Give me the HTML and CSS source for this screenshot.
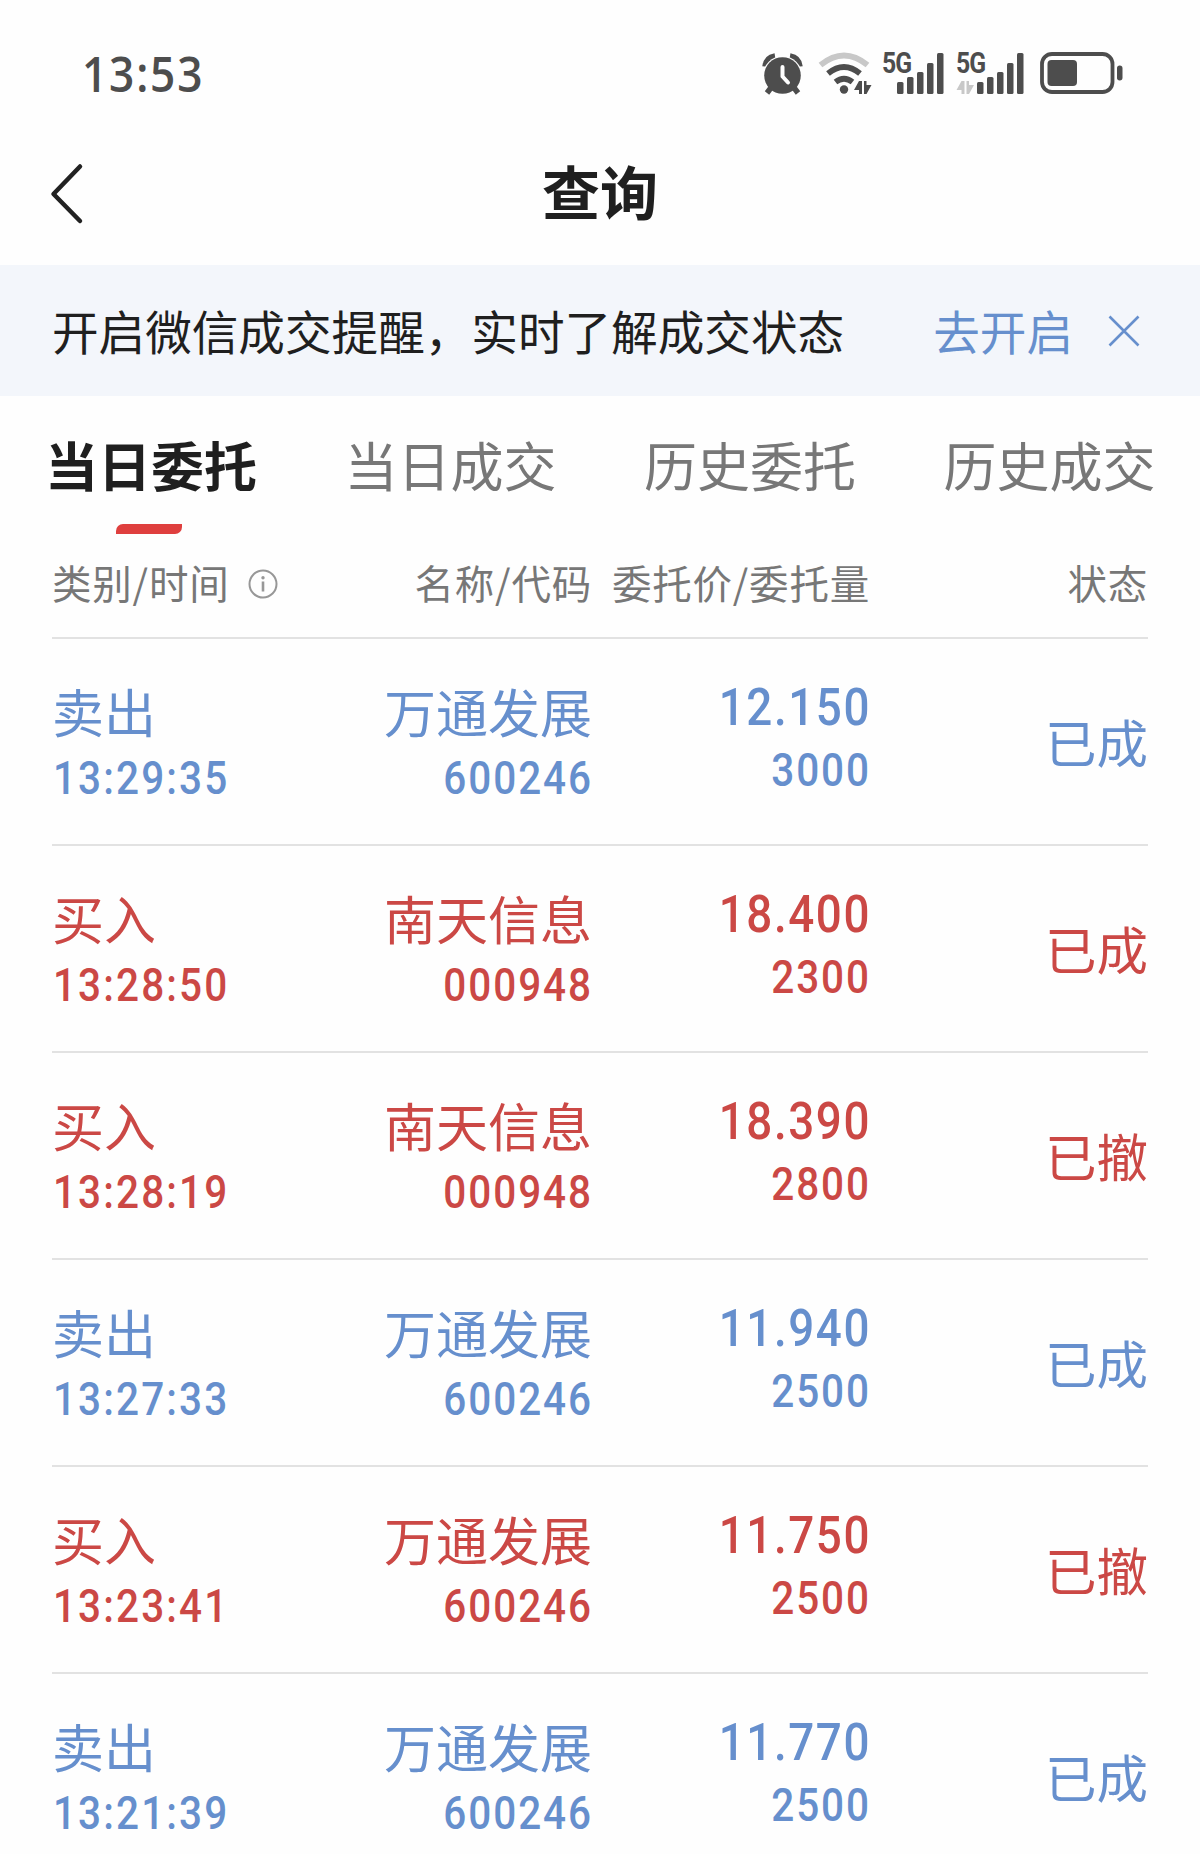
FILE: index.html
```html
<!DOCTYPE html>
<html lang="zh-CN">
<head>
    <meta charset="UTF-8">
    <meta name="viewport" content="width=device-width, initial-scale=1.0">
    <title>查询</title>
    <link rel="stylesheet" href="styles.css">
</head>
<body>
    <div class="status-bar">
        <span class="clock">13:53</span>
        <svg class="status-icons" width="340" height="44" viewBox="0 0 340 44" fill="#4d4d4d">
            <!-- alarm -->
            <g>
                <path d="M2 13.500 Q3 4.500 12 3 M27 3 Q36 4.500 37 13.500" fill="none" stroke="#4d4d4d" stroke-width="5.500"/>
                <path d="M8.500 34 L4 40 M30.500 34 L35 40" stroke="#4d4d4d" stroke-width="5.500"/>
                <circle cx="19.500" cy="22.500" r="19.500" stroke="none" fill="#fefefe" clip-path="inset(0 0 18px 0)"/>
                <circle cx="19.500" cy="22.500" r="18.300"/>
                <path d="M19.500 14 V23.500 L25 29.500" fill="none" stroke="#fff" stroke-width="4" stroke-linecap="round" stroke-linejoin="round"/>
            </g>
            <!-- wifi -->
            <g fill="none" stroke-width="5.800">
                <path d="M57.500 12 Q81 -7 104.500 12" stroke="#c8c8c8"/>
                <path d="M65 20.500 Q81 7.500 97 20.500" stroke="#4d4d4d"/>
                <path d="M72.500 29 Q81 22.500 89.500 29" stroke="#4d4d4d"/>
            </g>
            <circle cx="81" cy="36.500" r="4.200"/>
            <path d="M96 28 H99 V41 H96 V37 H91 Z M101 28 H103.500 V32 H108.500 L103.500 41 H101 Z"/>
            <!-- sim 1 -->
            <text class="net" transform="translate(119 20) scale(.84 1)">5G</text>
            <g>
                <rect x="134" y="29" width="6.500" height="12" rx="1.500"/>
                <rect x="144" y="24" width="6.500" height="17" rx="1.500"/>
                <rect x="154" y="19" width="6.500" height="22" rx="1.500"/>
                <rect x="164" y="10" width="6.500" height="31" rx="1.500"/>
                <rect x="174" y="0" width="6.500" height="41" rx="1.500"/>
            </g>
            <!-- sim 2 -->
            <text class="net" transform="translate(193 20) scale(.84 1)">5G</text>
            <path fill="#c8c8c8" d="M198.500 28 H201.500 V41 H198.500 V37 H193.500 Z M203.500 28 H206 V32 H211 L206 41 H203.500 Z"/>
            <g>
                <rect x="214" y="29" width="6.500" height="12" rx="1.500"/>
                <rect x="224" y="24" width="6.500" height="17" rx="1.500"/>
                <rect x="234" y="19" width="6.500" height="22" rx="1.500"/>
                <rect x="244" y="10" width="6.500" height="31" rx="1.500"/>
                <rect x="254" y="0" width="6.500" height="41" rx="1.500"/>
            </g>
            <!-- battery -->
            <rect x="279" y="1" width="70.500" height="38" rx="10" fill="none" stroke="#4d4d4d" stroke-width="3.800"/>
            <rect x="284.500" y="7" width="29.500" height="26" rx="4"/>
            <rect x="354" y="12.500" width="5.500" height="15" rx="2.700"/>
        </svg>
    </div>

    <header class="nav">
        <svg class="back" width="36" height="62" viewBox="0 0 36 62">
            <path d="M30 3.500 L3.500 31 L30 58" fill="none" stroke="#222" stroke-width="4.500" stroke-linecap="round" stroke-linejoin="round"/>
        </svg>
        <h1>查询</h1>
    </header>

    <div class="notice">
        <p>开启微信成交提醒，实时了解成交状态</p>
        <a class="notice-link">去开启</a>
        <svg class="notice-close" width="32" height="32" viewBox="0 0 32 32">
            <path d="M1.500 1.500 L30.500 30.500 M30.500 1.500 L1.500 30.500" stroke="#668fcd" stroke-width="2.600"/>
        </svg>
    </div>

    <nav class="tabs">
        <a class="tab active">当日委托</a>
        <a class="tab">当日成交</a>
        <a class="tab">历史委托</a>
        <a class="tab">历史成交</a>
    </nav>

    <div class="list">
        <div class="list-head">
            <div class="head-type">类别/时间
                <svg class="info" width="30" height="30" viewBox="0 0 30 30">
                    <circle cx="15" cy="15" r="13.500" fill="none" stroke="#979797" stroke-width="2"/>
                    <circle cx="15" cy="8.700" r="1.700" fill="#979797"/>
                    <path d="M15 12.500 V22.500" stroke="#979797" stroke-width="2.600"/>
                </svg>
            </div>
            <div>名称/代码</div>
            <div>委托价/委托量</div>
            <div>状态</div>
        </div>

        <div class="row sell">
            <div class="type"><b>卖出</b><span class="num time">13:29:35</span></div>
            <div class="name"><b>万通发展</b><span class="num">600246</span></div>
            <div class="order"><span class="num price">12.150</span><span class="num">3000</span></div>
            <div class="state">已成</div>
        </div>
        <div class="row buy">
            <div class="type"><b>买入</b><span class="num time">13:28:50</span></div>
            <div class="name"><b>南天信息</b><span class="num">000948</span></div>
            <div class="order"><span class="num price">18.400</span><span class="num">2300</span></div>
            <div class="state">已成</div>
        </div>
        <div class="row buy">
            <div class="type"><b>买入</b><span class="num time">13:28:19</span></div>
            <div class="name"><b>南天信息</b><span class="num">000948</span></div>
            <div class="order"><span class="num price">18.390</span><span class="num">2800</span></div>
            <div class="state">已撤</div>
        </div>
        <div class="row sell">
            <div class="type"><b>卖出</b><span class="num time">13:27:33</span></div>
            <div class="name"><b>万通发展</b><span class="num">600246</span></div>
            <div class="order"><span class="num price">11.940</span><span class="num">2500</span></div>
            <div class="state">已成</div>
        </div>
        <div class="row buy">
            <div class="type"><b>买入</b><span class="num time">13:23:41</span></div>
            <div class="name"><b>万通发展</b><span class="num">600246</span></div>
            <div class="order"><span class="num price">11.750</span><span class="num">2500</span></div>
            <div class="state">已撤</div>
        </div>
        <div class="row sell">
            <div class="type"><b>卖出</b><span class="num time">13:21:39</span></div>
            <div class="name"><b>万通发展</b><span class="num">600246</span></div>
            <div class="order"><span class="num price">11.770</span><span class="num">2500</span></div>
            <div class="state">已成</div>
        </div>
    </div>
</body>
</html>
```
FILE: styles.css
```css
* {
    margin: 0;
    padding: 0;
    box-sizing: border-box;
}

body {
    width: 1200px;
    height: 1854px;
    overflow: hidden;
    background: #fefefe;
    color: #1f1f1f;
    font-family: 'Noto Sans CJK SC', sans-serif;
}

.status-bar {
    height: 128px;
    padding: 53px 76px 0 82px;
    display: flex;
    justify-content: space-between;
    align-items: flex-start;
}

.clock {
    font-family: 'Open Sans', sans-serif;
    font-weight: 600;
    font-size: 48px;
    letter-spacing: 2px;
    line-height: 42px;
    color: #4d4d4d;
    transform: scaleX(0.92);
    transform-origin: left;
}

.status-icons {
    overflow: visible;
    margin-right: 21px;
}

.net {
    font-family: Roboto, sans-serif;
    font-weight: 700;
    font-size: 29.5px;
    letter-spacing: -1.2px;
}

.nav {
    height: 137px;
    padding: 0 50px;
    display: flex;
    align-items: center;
}

.back {
    margin-top: -6px;
}

.nav h1 {
    flex: 1;
    margin: -14px 36px 0 0;
    text-align: center;
    font-size: 58px;
    font-weight: 700;
    line-height: 80px;
}

.notice {
    height: 131px;
    padding: 0 60px 1px 52px;
    display: flex;
    align-items: center;
    background: #f3f6fb;
    font-size: 46.6px;
    line-height: 60px;
}

.notice p {
    flex: 1;
}

.notice-link {
    color: #668fcd;
}

.notice-close {
    margin: 1px 0 0 35px;
}

.tabs {
    height: 144px;
    padding: 33px 0 0 45px;
    display: flex;
}

.tab {
    position: relative;
    width: 299.5px;
    flex: none;
    font-size: 53px;
    line-height: 70px;
    color: #777;
}

.tab.active {
    color: #1f1f1f;
    font-weight: 700;
}

.tab.active::after {
    content: '';
    position: absolute;
    left: 71px;
    top: 95px;
    width: 66px;
    height: 10px;
    background: #df3f3e;
    border-radius: 7px 0 7px 0;
}

.list {
    margin: 0 52px;
}

.list-head,
.row {
    display: grid;
    grid-template-columns: 270px 270px 278px 278px;
    border-bottom: 2px solid #e2e2e2;
    text-align: right;
}

.list-head {
    height: 99px;
    padding-top: 14px;
    font-size: 39.5px;
    letter-spacing: 0.8px;
    line-height: 56px;
    color: #777;
    white-space: nowrap;
}

.head-type {
    height: 56px;
    display: flex;
    align-items: center;
    gap: 19px;
}

.info {
    margin-top: 3px;
}

.row {
    height: 207px;
    padding-top: 38px;
}

.row b {
    font-size: 52px;
    font-weight: 400;
    line-height: 68px;
}

.type,
.name,
.order {
    display: flex;
    flex-direction: column;
}

.type {
    text-align: left;
}

/* narrow digits for prices, codes and times */
.num {
    font-family: Roboto, sans-serif;
    font-weight: 500;
    font-size: 46px;
    letter-spacing: 2.2px;
    line-height: 66px;
    transform: translateX(1px) scaleX(0.88);
    transform-origin: right;
}

.time {
    letter-spacing: 2.4px;
    transform-origin: left;
}

.order {
    padding-top: 1px;
    gap: 2px;
}

.order .num {
    line-height: 60px;
}

.order .price {
    font-size: 52px;
    letter-spacing: 1.8px;
}

.state {
    font-size: 51.5px;
    line-height: 68px;
    padding-top: 30px;
}

.sell {
    color: #668fcd;
}

.buy {
    color: #cb4845;
}
```
